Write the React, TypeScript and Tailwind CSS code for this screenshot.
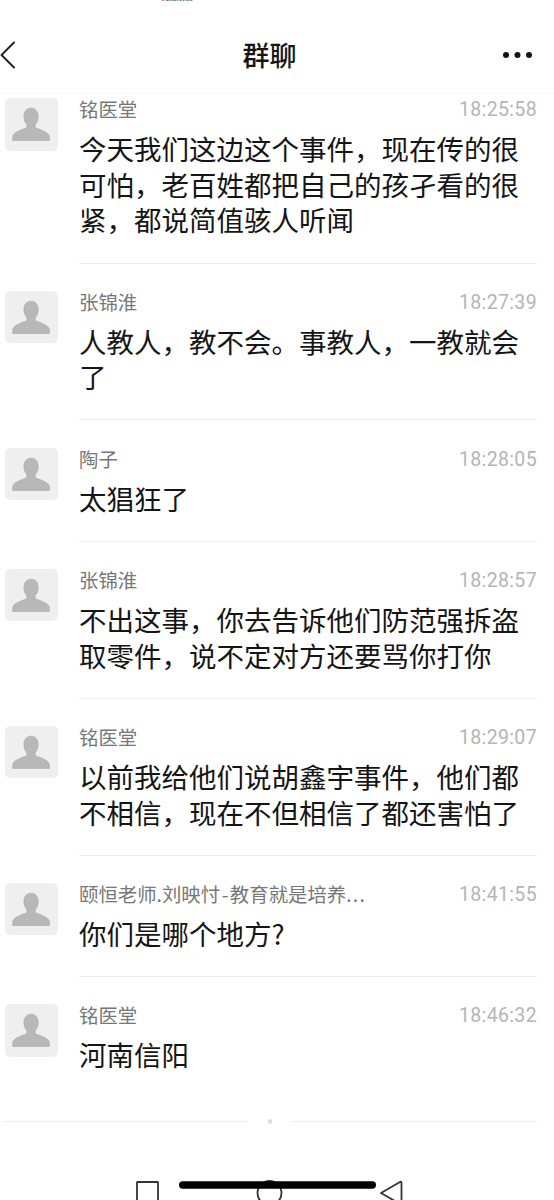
type Message = { name: string; suffix?: string; time: string; lines: string[]; height: string };

const messages: Message[] = [
  {
    name: "铭医堂",
    time: "18:25:58",
    lines: ["今天我们这边这个事件，现在传的很", "可怕，老百姓都把自己的孩孑看的很", "紧，都说简值骇人听闻"],
    height: "h-[192.5px]",
  },
  { name: "张锦淮", time: "18:27:39", lines: ["人教人，教不会。事教人，一教就会", "了"], height: "h-[157px]" },
  { name: "陶子", time: "18:28:05", lines: ["太猖狂了"], height: "h-[121.3px]" },
  { name: "张锦淮", time: "18:28:57", lines: ["不出这事，你去告诉他们防范强拆盗", "取零件，说不定对方还要骂你打你"], height: "h-[157px]" },
  { name: "铭医堂", time: "18:29:07", lines: ["以前我给他们说胡鑫宇事件，他们都", "不相信，现在不但相信了都还害怕了"], height: "h-[157px]" },
  { name: "颐恒老师.刘映忖", suffix: "教育就是培养", time: "18:41:55", lines: ["你们是哪个地方?"], height: "h-[121.3px]" },
  { name: "铭医堂", time: "18:46:32", lines: ["河南信阳"], height: "h-[115px]" },
];

function Avatar() {
  return (
    <div className="h-[52.500px] w-[52.500px] shrink-0 rounded-[5px] bg-[#efefef]">
      <svg viewBox="0 0 53 53" className="h-full w-full">
        <path
          d="M26.300 10.300c4.300 0 7.200 3.300 7.200 8.200 0 3.500-1.100 6.300-3 8.300v2c0 .9.400 1.500 1.200 1.800 4.200 1.300 8.200 2.900 11 5 1.500 1.200 2.100 2.500 2.100 4.200v3H7.800v-3c0-1.700.6-3 2.100-4.200 2.800-2.100 6.800-3.700 11-5 .8-.3 1.200-.9 1.200-1.800v-2c-1.900-2-3-4.800-3-8.300 0-4.900 2.900-8.200 7.200-8.200z"
          fill="#b8b8b8"
          stroke="#ababab"
          strokeWidth="0.7"
        />
      </svg>
    </div>
  );
}

function MessageRow({ message, last }: { message: Message; last: boolean }) {
  return (
    <li className={`flex shrink-0 pl-[5px] ${message.height}`}>
      <Avatar />
      <div className="ml-[21.500px] mr-[17px] flex-1">
        <div className="flex h-6 items-center justify-between whitespace-nowrap">
          <span className="-mt-[2px] text-[19.400px] leading-6 text-[#777777]">
            {message.name}
            {message.suffix && (
              <>
                <span className="px-[1.500px]">-</span>
                {message.suffix}
                <span className="tracking-[1.200px]">...</span>
              </>
            )}
          </span>
          <time className="font-['Roboto','Noto_Sans_CJK_SC',sans-serif] text-[19.500px] leading-6 tracking-[0.350px] text-[#b5b5b5]">{message.time}</time>
        </div>
        <div className="mt-[9px] whitespace-nowrap text-[27.500px] leading-[35.700px] text-[#151515]">
          {message.lines.map((line) => (
            <p key={line}>{line}</p>
          ))}
        </div>
        {!last && <div className="mt-[24.500px] h-px bg-[#ededed]" />}
      </div>
    </li>
  );
}

export default function App() {
  return (
    <div className="flex h-[1200px] w-[554px] flex-col overflow-hidden bg-white font-['Noto_Sans_CJK_SC',sans-serif]">
      <div className="flex h-[2px] shrink-0 items-end overflow-hidden pl-[161px] text-[8px] leading-[10px] text-[#555555]">
        <span>找加朋友</span>
      </div>
      <header className="flex h-[92px] shrink-0 items-center justify-between border-b border-[#f8f8f8] pt-[14px]">
        <svg viewBox="0 0 80 30" className="h-[30px] w-[80px]" fill="none" stroke="#222222" strokeWidth="2" strokeLinecap="round" strokeLinejoin="round">
          <path d="M14 2.500 1.500 15 14 27.500" />
        </svg>
        <h1 className="-ml-[15px] text-[27px] font-medium leading-9 text-[#151515]">群聊</h1>
        <svg viewBox="0 0 80 30" className="h-[30px] w-[80px]" fill="#151515">
          <circle cx="32" cy="15" r="3" />
          <circle cx="43.500" cy="15" r="3" />
          <circle cx="55" cy="15" r="3" />
        </svg>
      </header>
      <ul className="flex shrink-0 flex-col pt-[4px]">
        {messages.map((message, index) => (
          <MessageRow key={message.time} message={message} last={index === messages.length - 1} />
        ))}
      </ul>
      <div className="flex shrink-0 items-center justify-between pl-[3px] pr-[17px]">
        <div className="h-px w-[245px] bg-[#ededed]" />
        <div className="h-[4.500px] w-[4.500px] rounded-full bg-[#dddddd]" />
        <div className="h-px w-[245px] bg-[#ededed]" />
      </div>
      <nav className="mt-auto h-[24px] shrink-0">
        <svg viewBox="0 0 554 24" className="h-full w-full" fill="none" stroke="#333333" strokeWidth="1.800" strokeLinejoin="round">
          <rect x="137" y="6" width="21" height="21" rx="0.500" />
          <circle cx="269.500" cy="17" r="12" />
          <path d="M381 17 400 6Q401.500 5.200 401.500 7v20Q401.500 29 400 28Z" />
          <rect x="179" y="5.300" width="197" height="7.400" rx="3.700" fill="#000000" stroke="none" />
        </svg>
      </nav>
    </div>
  );
}
